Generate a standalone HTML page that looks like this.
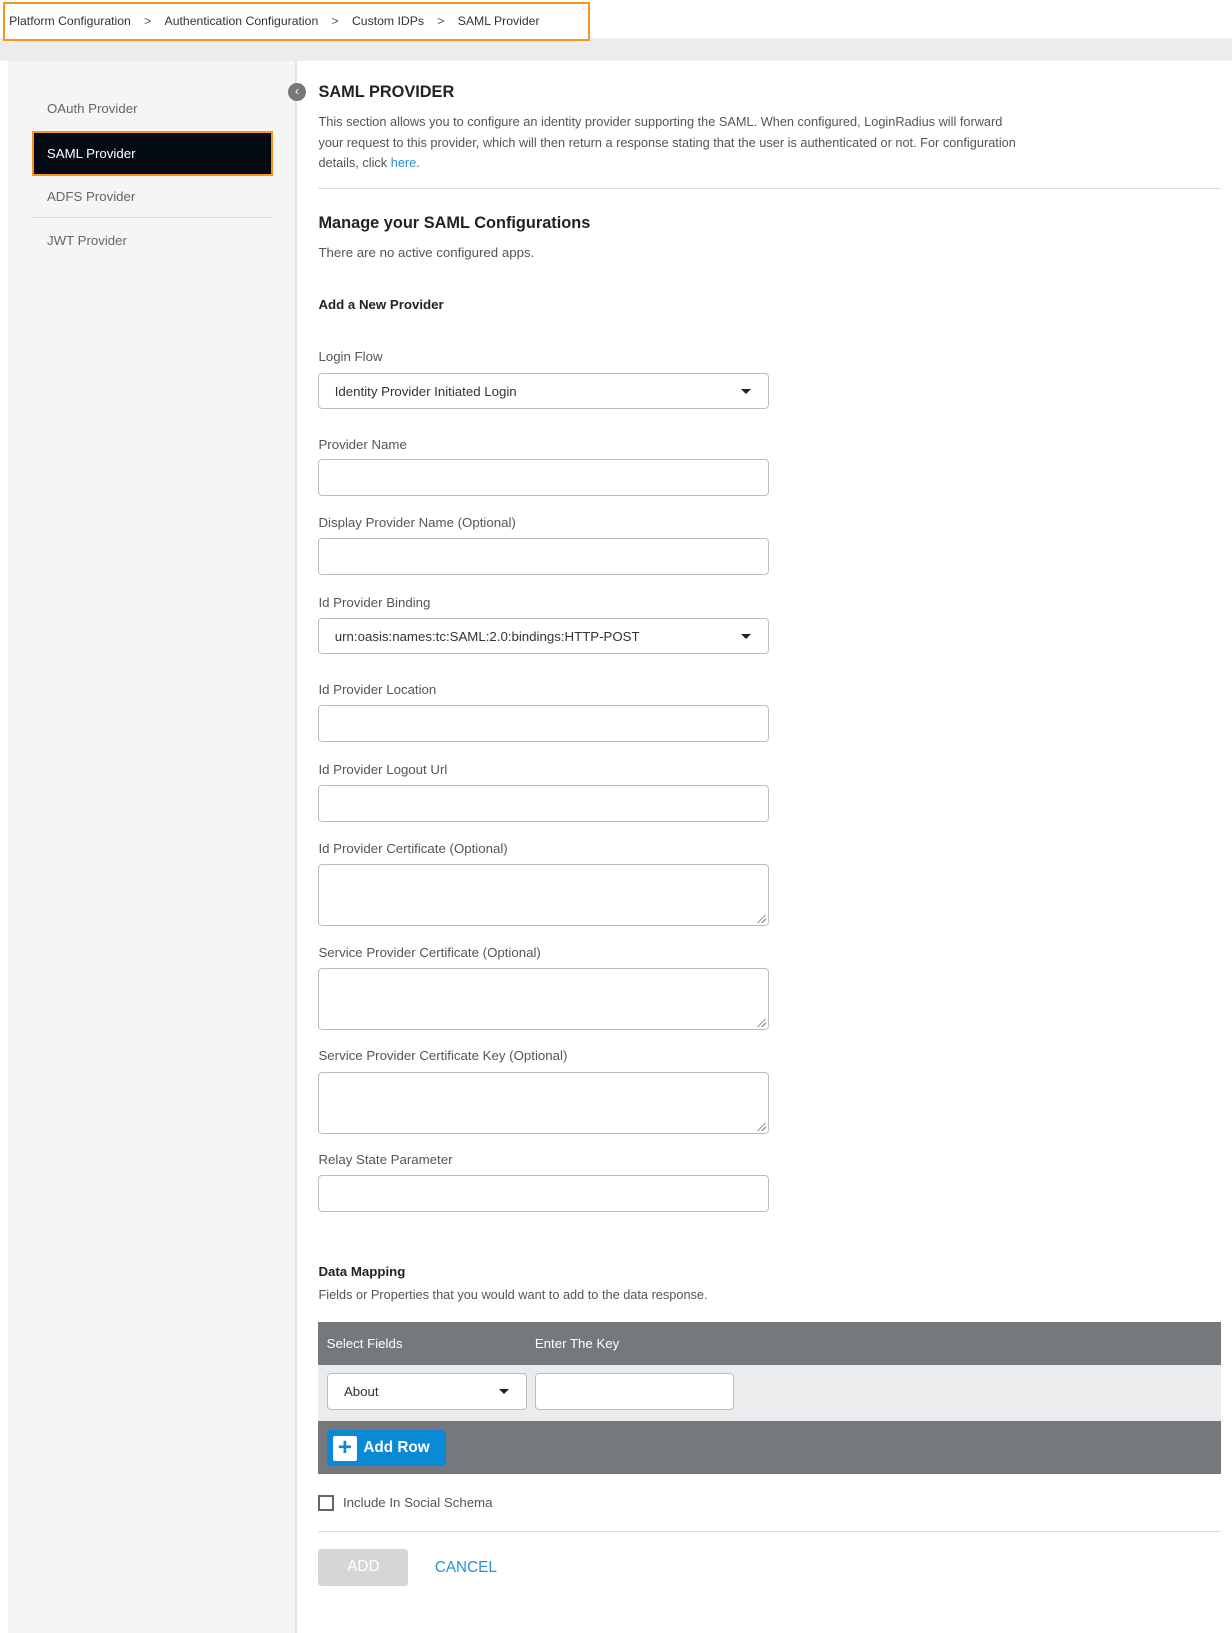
<!DOCTYPE html>
<html><head><meta charset="utf-8"><style>
*{box-sizing:border-box;margin:0;padding:0}
body{width:1232px;height:1600px;background:#fff;font-family:"Liberation Sans",sans-serif;color:#333;position:relative;overflow:hidden}
#w{position:absolute;left:0;top:0;width:1207px;height:1568px;zoom:1.0207}
.a{position:absolute}
.crumb{left:3px;top:2px;width:575px;height:38px;border:2px solid #f7941d;font-size:12px;color:#333;padding:10px 0 0 4px;white-space:nowrap;background:#fff;z-index:2}
.crumb span.s{margin:0 13px;color:#555}
.band{left:0;top:37px;width:1207px;height:23px;background:#ebecee}
.side{left:8px;top:60px;width:283px;height:1540px;background:#f5f5f5;border-right:2px solid #e2e2e2}
.si{left:38px;font-size:13px;color:#666}
.lbl{left:312px;font-size:13px;color:#555}
.inp{left:312px;width:441px;height:36px;border:1px solid #bbb;border-radius:4px;background:#fff}
.ta{height:61px}
.sel{font-size:13px;color:#333;padding:10px 0 0 15px}
.car{position:absolute;right:16px;top:15px;width:0;height:0;border-left:5px solid transparent;border-right:5px solid transparent;border-top:5px solid #222}
.grip{position:absolute;right:2px;bottom:2px;width:8px;height:8px;background:linear-gradient(135deg,transparent 45%,#999 45%,#999 55%,transparent 55%,transparent 70%,#999 70%,#999 80%,transparent 80%)}
</style></head><body><div id="w">
<div class="a crumb">Platform Configuration<span class="s">&gt;</span>Authentication Configuration<span class="s">&gt;</span>Custom IDPs<span class="s">&gt;</span>SAML Provider</div>
<div class="a band"></div>
<div class="a side"></div>
<div class="a si" style="left:46px;top:99px">OAuth Provider</div>
<div class="a" style="left:31px;top:128px;width:236px;height:44px;background:#040b14;border:2px solid #f7941d;color:#fff;font-size:13px;padding:13px 0 0 13px">SAML Provider</div>
<div class="a si" style="left:46px;top:185px">ADFS Provider</div>
<div class="a" style="left:31px;top:213px;width:235px;height:1px;background:#ddd"></div>
<div class="a si" style="left:46px;top:228px">JWT Provider</div>
<div class="a" style="left:282px;top:81px;width:18px;height:18px;border-radius:50%;background:#777;color:#fff;font-size:12px;text-align:center;line-height:17px">&#8249;</div>
<div class="a" style="left:312px;top:81px;font-size:16px;font-weight:bold;color:#222">SAML PROVIDER</div>
<div class="a" style="left:312px;top:110px;width:690px;font-size:12.5px;line-height:20px;color:#555">This section allows you to configure an identity provider supporting the SAML. When configured, LoginRadius will forward your request to this provider, which will then return a response stating that the user is authenticated or not. For configuration details, click <span style="color:#2a8fd6">here</span>.</div>
<div class="a" style="left:312px;top:184px;width:884px;height:1px;background:#ddd"></div>
<div class="a" style="left:312px;top:210px;font-size:16px;font-weight:bold;color:#222">Manage your SAML Configurations</div>
<div class="a" style="left:312px;top:240px;font-size:13px;color:#555">There are no active configured apps.</div>
<div class="a" style="left:312px;top:291px;font-size:13px;font-weight:bold;color:#222">Add a New Provider</div>

<div class="a lbl" style="top:342px">Login Flow</div>
<div class="a inp sel" style="top:365px">Identity Provider Initiated Login<div class="car"></div></div>
<div class="a lbl" style="top:428px">Provider Name</div>
<div class="a inp" style="top:450px"></div>
<div class="a lbl" style="top:505px">Display Provider Name (Optional)</div>
<div class="a inp" style="top:527px"></div>
<div class="a lbl" style="top:583px">Id Provider Binding</div>
<div class="a inp sel" style="top:605px">urn:oasis:names:tc:SAML:2.0:bindings:HTTP-POST<div class="car"></div></div>
<div class="a lbl" style="top:668px">Id Provider Location</div>
<div class="a inp" style="top:691px"></div>
<div class="a lbl" style="top:747px">Id Provider Logout Url</div>
<div class="a inp" style="top:769px"></div>
<div class="a lbl" style="top:824px">Id Provider Certificate (Optional)</div>
<div class="a inp ta" style="top:846px"><div class="grip"></div></div>
<div class="a lbl" style="top:926px">Service Provider Certificate (Optional)</div>
<div class="a inp ta" style="top:948px"><div class="grip"></div></div>
<div class="a lbl" style="top:1027px">Service Provider Certificate Key (Optional)</div>
<div class="a inp ta" style="top:1050px"><div class="grip"></div></div>
<div class="a lbl" style="top:1129px">Relay State Parameter</div>
<div class="a inp" style="top:1151px"></div>

<div class="a" style="left:312px;top:1238px;font-size:13px;font-weight:bold;color:#222">Data Mapping</div>
<div class="a" style="left:312px;top:1261px;font-size:12.5px;color:#555">Fields or Properties that you would want to add to the data response.</div>
<div class="a" style="left:312px;top:1295px;width:884px;height:42px;background:#75797d;color:#fff;font-size:13px"><span class="a" style="left:8px;top:14px">Select Fields</span><span class="a" style="left:212px;top:14px">Enter The Key</span></div>
<div class="a" style="left:312px;top:1337px;width:884px;height:55px;background:#ebecee"></div>
<div class="a inp sel" style="left:320px;top:1345px;width:196px;padding-left:16px">About<div class="car"></div></div>
<div class="a inp" style="left:524px;top:1345px;width:195px"></div>
<div class="a" style="left:312px;top:1392px;width:884px;height:52px;background:#75797d"></div>
<div class="a" style="left:320px;top:1401px;width:117px;height:35px;background:#0a8ad6;border-radius:3px;color:#fff;font-size:15px;font-weight:bold"><span class="a" style="left:6px;top:6px;width:24px;height:24px;background:#fff;border-radius:2px;color:#0a8ad6;font-size:24px;line-height:24px;text-align:center">+</span><span class="a" style="left:36px;top:9px">Add Row</span></div>
<div class="a" style="left:312px;top:1465px;width:15px;height:15px;border:2px solid #666;background:#fff"></div>
<div class="a" style="left:336px;top:1465px;font-size:13px;color:#555">Include In Social Schema</div>
<div class="a" style="left:312px;top:1500px;width:884px;height:1px;background:#ddd"></div>
<div class="a" style="left:312px;top:1518px;width:88px;height:36px;background:#d5d6d8;border-radius:3px;color:#fff;font-size:15px;text-align:center;line-height:36px">ADD</div>
<div class="a" style="left:426px;top:1527px;font-size:15px;color:#2a8fd6">CANCEL</div>
</div></body></html>
